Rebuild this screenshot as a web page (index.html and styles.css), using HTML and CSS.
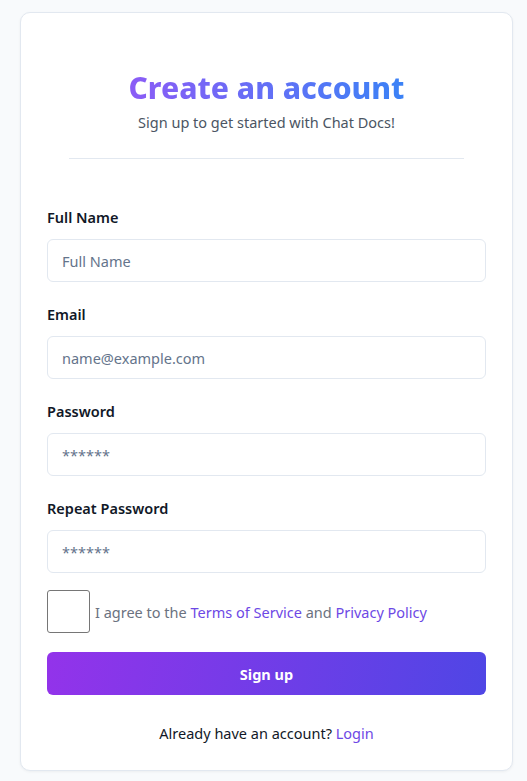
FILE: index.html
```html
<!DOCTYPE html>
<html>
<head>
<meta charset="utf-8">
<link rel="stylesheet" href="styles.css">
</head>
<body>
<div class="card">
  <div class="head">
    <h1 class="title">Create an account</h1>
    <p class="sub">Sign up to get started with Chat Docs!</p>
  </div>
  <hr class="divider">
  <form class="form">
    <div class="field">
      <label class="label">Full Name</label>
      <input class="input" type="text" placeholder="Full Name">
    </div>
    <div class="field">
      <label class="label">Email</label>
      <input class="input" type="email" placeholder="name@example.com">
    </div>
    <div class="field">
      <label class="label">Password</label>
      <input class="input" type="password" placeholder="******">
    </div>
    <div class="field">
      <label class="label">Repeat Password</label>
      <input class="input" type="password" placeholder="******">
    </div>
    <div class="agree">
      <span class="check"></span>
      <span class="agree-text">I agree to the <a class="link">Terms of Service</a> and <a class="link">Privacy Policy</a></span>
    </div>
    <button class="btn" type="button">Sign up</button>
    <p class="foot">Already have an account? <a class="link">Login</a></p>
  </form>
</div>
</body>
</html>
```
FILE: styles.css
```css
* { box-sizing: border-box; }
html, body { margin: 0; padding: 0; }
body {
  background: #f8fafc;
  font-family: "Noto Sans", "Open Sans", sans-serif;
  color: #111827;
  padding: 12px 0 10px 20px;
}
.card {
  width: 493px;
  height: 759px;
  background: #fff;
  border: 1px solid #e2e8f0;
  border-radius: 10px;
  box-shadow: 0 1px 3px rgba(0,0,0,0.05);
  padding: 57px 26px 0 26px;
}
.head { text-align: center; }
.title {
  margin: 0;
  font-size: 30px;
  font-weight: 800;
  line-height: 36px;
  background: linear-gradient(90deg, #8b5cf6, #3b82f6);
  -webkit-background-clip: text;
  background-clip: text;
  color: transparent;
  display: inline-block;
}
.sub {
  margin: 6px 0 0;
  font-size: 14.5px;
  color: #4b5563;
  line-height: 20px;
}
.divider {
  border: 0;
  border-top: 1px solid #e2e8f0;
  margin: 26px 22px 0;
}
.form { margin-top: 48px; display: flex; flex-direction: column; }
.field { display: flex; flex-direction: column; margin-bottom: 22px; }
.label {
  font-size: 14.5px;
  font-weight: 600;
  line-height: 20px;
  margin-bottom: 12px;
  color: #111827;
}
.input {
  height: 43px;
  border: 1px solid #e2e8f0;
  border-radius: 6px;
  padding: 0 14px;
  font-family: inherit;
  font-size: 14.5px;
  color: #111827;
}
.input::placeholder { color: #64748b; }
.agree { display: flex; align-items: center; gap: 5px; margin-top: -5px; }
.check {
  width: 43px; height: 43px;
  border: 1px solid #767676;
  border-radius: 3px;
  flex: none;
}
.agree-text { font-size: 14.5px; color: #6b7280; }
.link { color: #6d48e5; text-decoration: none; }
.btn {
  margin-top: 19px;
  height: 43px;
  border: 0;
  border-radius: 6px;
  background: linear-gradient(100deg, #9333ea, #4f46e5);
  color: #fff;
  font-family: inherit;
  font-size: 14.5px;
  font-weight: 700;
}
.foot {
  text-align: center;
  margin: 28px 0 0;
  font-size: 14.5px;
  color: #111827;
}
```
